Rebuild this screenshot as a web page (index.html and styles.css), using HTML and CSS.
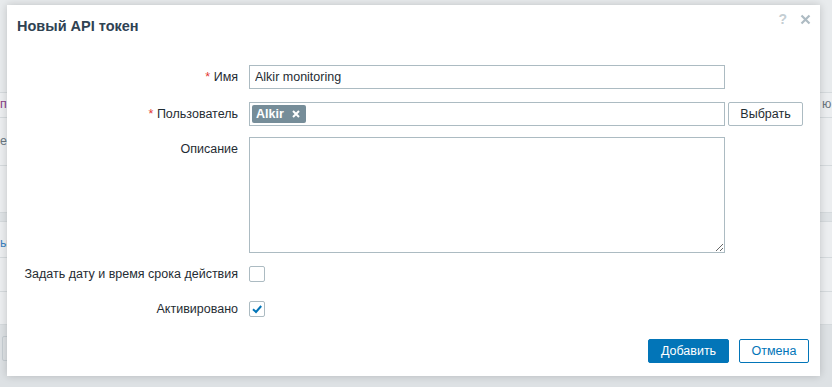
FILE: index.html
```html
<!DOCTYPE html>
<html lang="ru">
<head>
  <meta charset="UTF-8">
  <title>Новый API токен</title>
  <link rel="stylesheet" href="styles.css">
</head>
<body>

<!-- Page behind the overlay -->
<div class="page">
  <div class="page-row page-row-top"></div>
  <div class="page-row page-row-text">
    <span class="edge edge-left link-purple">п</span>
    <span class="edge edge-right">ю</span>
  </div>
  <div class="page-row page-row-text2">
    <span class="edge edge-left">е</span>
  </div>
  <div class="page-row page-row-mid"></div>
  <div class="page-row page-row-band"></div>
  <div class="page-row page-row-text3">
    <span class="edge edge-left link-blue">ы</span>
  </div>
  <div class="page-row page-row-plain"></div>
  <div class="page-row page-row-plain2"></div>
  <div class="page-footer">
    <span class="page-footer-box"></span>
  </div>
</div>

<!-- Dialog -->
<div class="dialog">
  <div class="dialog-header">
    <h4 class="dialog-title">Новый API токен</h4>
    <div class="dialog-tools">
      <span class="tool-help">?</span>
      <svg class="tool-close" width="11" height="11" viewBox="0 0 11 11">
        <path d="M1.5 1.5 L9.5 9.5 M9.5 1.5 L1.5 9.5" stroke="#aebbc3" stroke-width="2.2" fill="none"/>
      </svg>
    </div>
  </div>

  <form class="form">
    <div class="form-row">
      <label class="form-label"><span class="req">*</span> Имя</label>
      <div class="form-field">
        <input type="text" class="text-input" value="Alkir monitoring">
      </div>
    </div>

    <div class="form-row row-user">
      <label class="form-label"><span class="req">*</span> Пользователь</label>
      <div class="form-field field-inline">
        <div class="multiselect">
          <span class="tag">Alkir
            <svg class="tag-x" width="8" height="8" viewBox="0 0 8 8">
              <path d="M1 1 L7 7 M7 1 L1 7" stroke="#fff" stroke-width="2" fill="none"/>
            </svg>
          </span>
        </div>
        <button type="button" class="btn btn-alt">Выбрать</button>
      </div>
    </div>

    <div class="form-row row-desc">
      <label class="form-label">Описание</label>
      <div class="form-field">
        <textarea class="text-area"></textarea>
      </div>
    </div>

    <div class="form-row row-check">
      <label class="form-label">Задать дату и время срока действия</label>
      <div class="form-field">
        <span class="checkbox"></span>
      </div>
    </div>

    <div class="form-row row-check2">
      <label class="form-label">Активировано</label>
      <div class="form-field">
        <span class="checkbox">
          <svg width="14" height="14" viewBox="0 0 14 14">
            <path d="M3 7.2 L6 10 L11.2 4" stroke="#0275b8" stroke-width="2" fill="none"/>
          </svg>
        </span>
      </div>
    </div>
  </form>

  <div class="dialog-footer">
    <button type="button" class="btn btn-primary">Добавить</button>
    <button type="button" class="btn btn-secondary">Отмена</button>
  </div>
</div>

</body>
</html>
```

FILE: styles.css
```css
* {
  box-sizing: border-box;
}

body {
  margin: 0;
  background: #e8ebed;
  font-family: "Liberation Sans", Arial, sans-serif;
  font-size: 12.5px;
  color: #1f2c33;
  height: 387px;
  overflow: hidden;
  position: relative;
}

/* Page behind the dialog */
.page-row {
  border-bottom: 1px solid #d5dadd;
  position: relative;
  background: #eceef0;
}

.page-row-top   { height: 93px; background: #e8ebed; }
.page-row-text  { height: 25px; }
.page-row-text2 { height: 48px; }
.page-row-mid   { height: 47px; }
.page-row-band  { height: 9px; background: #dfe3e6; }
.page-row-text3 { height: 36px; }
.page-row-plain { height: 34px; }
.page-row-plain2 { height: 33px; }

.edge {
  position: absolute;
  top: 4px;
  left: 0;
  color: #6a7780;
  line-height: 14px;
}

.edge-right {
  left: 822px;
}

.page-row-text2 .edge { top: 16px; }
.page-row-text3 .edge { top: 14px; }

.link-purple { color: #8a3f86; }
.link-blue   { color: #3a82c0; }

.page-footer {
  height: 70px;
  background: #dde1e4;
  position: relative;
}

.page-footer-box {
  position: absolute;
  left: 2px;
  top: 11px;
  width: 10px;
  height: 25px;
  border: 1px solid #c6cdd2;
  border-radius: 2px;
}

/* Dialog */
.dialog {
  position: absolute;
  left: 7px;
  top: 5px;
  width: 813px;
  height: 371px;
  background: #fff;
  box-shadow: 0 0 8px rgba(0, 0, 0, 0.18);
}

.dialog-header {
  display: flex;
  justify-content: space-between;
  align-items: center;
  padding: 13px 10px;
  height: 42px;
}

.dialog-title {
  margin: 0;
  font-size: 14.5px;
  font-weight: bold;
  line-height: 16px;
  color: #2f4353;
}

.dialog-tools {
  display: flex;
  align-items: center;
  gap: 13px;
  margin-top: -14px;
  margin-right: -1px;
}

.tool-help {
  font-size: 14px;
  font-weight: bold;
  color: #c5ced3;
  line-height: 14px;
}

/* Form */
.form {
  padding-top: 18px;
}

.form-row {
  display: flex;
  align-items: flex-start;
  min-height: 24px;
}

.form-label {
  width: 231px;
  text-align: right;
  line-height: 24px;
  white-space: nowrap;
  flex-shrink: 0;
}

.form-field {
  padding-left: 11px;
}

.req {
  color: #e33734;
}

.row-user  { margin-top: 13px; }
.row-desc  { margin-top: 11px; }
.row-check { margin-top: 9px; align-items: center; }
.row-check2 { margin-top: 11px; align-items: center; }

.field-inline {
  display: flex;
  gap: 3px;
}

.text-input {
  width: 476px;
  height: 24px;
  border: 1px solid #acbbc2;
  border-radius: 0;
  padding: 0 5px;
  font-family: inherit;
  font-size: 12.5px;
  color: #1f2c33;
  outline: none;
}

.multiselect {
  width: 476px;
  height: 24px;
  border: 1px solid #acbbc2;
  padding: 2px;
}

.tag {
  display: inline-flex;
  align-items: center;
  gap: 8px;
  height: 18px;
  padding: 0 6px 0 4px;
  background: #768d99;
  color: #fff;
  font-weight: bold;
  border-radius: 2px;
}

.text-area {
  display: block;
  width: 476px;
  height: 116px;
  border: 1px solid #acbbc2;
  border-radius: 0;
  margin: 0;
  font-family: inherit;
  font-size: 12.5px;
  outline: none;
}

.checkbox {
  display: flex;
  align-items: center;
  justify-content: center;
  width: 16px;
  height: 16px;
  border: 1px solid #acbbc2;
  border-radius: 2px;
  background: #fff;
}

/* Buttons */
.btn {
  height: 24px;
  padding: 0 8px;
  font-family: inherit;
  font-size: 12.5px;
  border-radius: 2px;
  cursor: pointer;
}

.btn-alt {
  width: 75px;
  background: #fff;
  border: 1px solid #acbbc2;
  color: #1f2c33;
}

.btn-primary {
  width: 81px;
  background: #0275b8;
  border: 1px solid #0275b8;
  color: #fff;
}

.btn-secondary {
  width: 70px;
  background: #fff;
  border: 1px solid #0275b8;
  color: #0275b8;
}

.dialog-footer {
  display: flex;
  justify-content: flex-end;
  gap: 10px;
  padding-right: 11px;
  margin-top: 18px;
}
```
